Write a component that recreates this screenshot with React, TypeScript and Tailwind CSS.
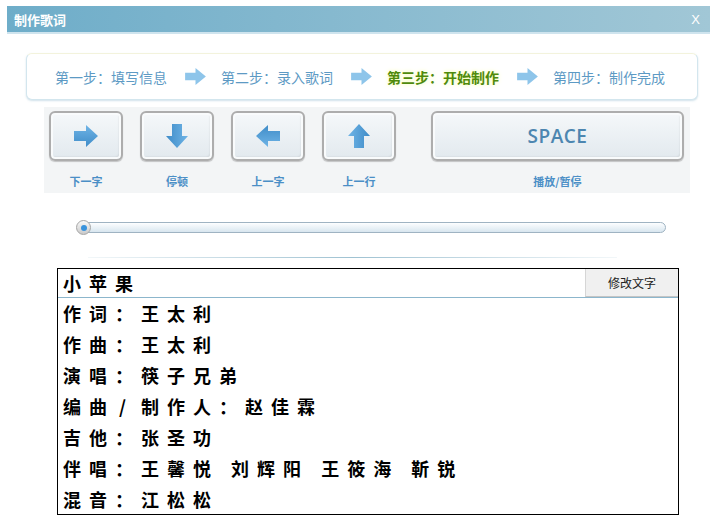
import React from 'react';

const cjk = { fontFamily: '"Noto Sans CJK SC", "Noto Sans", sans-serif' };

function Arrow({ dir, className }: { dir: 'right' | 'down' | 'left' | 'up'; className?: string }) {
  const rot = { right: 0, down: 90, left: 180, up: 270 }[dir];
  return (
    <svg viewBox="0 0 24 24" className={className}>
      <defs>
        <linearGradient id={`g-${dir}`} x1="0" y1="0" x2="0" y2="1">
          <stop offset="0" stopColor="#6fb4e6" />
          <stop offset="1" stopColor="#3f8cc8" />
        </linearGradient>
      </defs>
      <g transform={`rotate(${rot} 12 12)`}>
        <polygon points="0,7 12,7 12,1 24,12 12,23 12,17 0,17" fill={`url(#g-${dir})`} />
      </g>
    </svg>
  );
}

function StepArrow() {
  return (
    <svg viewBox="0 0 22 18" className="w-[21px] h-[17px] shrink-0">
      <polygon points="0,5 11,5 11,0 22,9 11,18 11,13 0,13" fill="#8ec5ea" />
    </svg>
  );
}

const keyCls =
  'rounded-[6px] border-2 border-[#adadad] bg-gradient-to-b from-[#f5f8fa] to-[#e2e9ee] shadow-[inset_0_0_0_2px_#f9fbfc,inset_-2px_-2px_2px_rgba(0,0,0,0.12),0_1px_1px_rgba(0,0,0,0.2)] flex items-center justify-center';

export default function App() {
  const steps = ['第一步：填写信息', '第二步：录入歌词', '第三步：开始制作', '第四步：制作完成'];
  const keys: { dir: 'right' | 'down' | 'left' | 'up'; label: string }[] = [
    { dir: 'right', label: '下一字' },
    { dir: 'down', label: '停顿' },
    { dir: 'left', label: '上一字' },
    { dir: 'up', label: '上一行' },
  ];
  const lines = [
    '作词：王太利',
    '作曲：王太利',
    '演唱：筷子兄弟',
    '编曲/制作人：赵佳霖',
    '吉他：张圣功',
    '伴唱：王馨悦 刘辉阳 王筱海 靳锐',
    '混音：江松松',
  ];

  return (
    <div className="w-[719px] h-[517px] bg-white overflow-hidden" style={cjk}>
      {/* title bar */}
      <div className="ml-[7px] mt-[6px] w-[703px] h-[26px] flex items-center justify-between pl-[7px] pr-[10px] bg-gradient-to-r from-[#6eadc9] to-[#a1c7d6]">
        <span className="text-white text-[13px] font-bold leading-none">制作歌词</span>
        <span className="text-white text-[13px] leading-none" style={{ fontFamily: '"Liberation Sans", sans-serif' }}>
          X
        </span>
      </div>
      <div className="ml-[7px] w-[703px] h-[2px] bg-[#cfe4ee]" />

      {/* steps */}
      <div className="mt-[19px] ml-[26px] w-[672px] h-[47px] rounded-[6px] border border-[#d3e6ee] border-t-[#f3f3dc] bg-white shadow-[0_1px_2px_rgba(120,170,195,0.35)] flex items-center pl-[28px] gap-[15px]">
        {steps.map((s, i) => (
          <React.Fragment key={s}>
            {i > 0 && <StepArrow />}
            <span
              className={`text-[14px] leading-none w-[115px] whitespace-nowrap ${
                i === 2 ? 'text-[#4f8a0c] font-semibold [text-shadow:0_0_4px_#f4ffa0]' : 'text-[#5d9ac4]'
              }`}
            >
              {s}
            </span>
          </React.Fragment>
        ))}
      </div>

      {/* key panel */}
      <div className="mt-[7px] ml-[44px] w-[646px] h-[86px] bg-[#f3f5f6] pt-[4px] pl-[5px]">
        <div className="flex">
          {keys.map((k) => (
            <div key={k.label} className="w-[74px] mr-[17px] flex flex-col items-center">
              <div className={`w-[74px] h-[50px] ${keyCls}`}>
                <Arrow dir={k.dir} className="w-[24px] h-[24px]" />
              </div>
              <span className="mt-[13px] text-[11px] font-bold text-[#4b8fc6] leading-[14px]">{k.label}</span>
            </div>
          ))}
          <div className="ml-[18px] w-[253px] flex flex-col items-center">
            <div className={`w-[253px] h-[50px] ${keyCls}`}>
              <span
                className="text-[19px] font-semibold text-[#4d86b0] tracking-[0.5px]"
                style={{ fontFamily: '"Open Sans", sans-serif' }}
              >
                SPACE
              </span>
            </div>
            <span className="mt-[13px] text-[11px] font-bold text-[#4b8fc6] leading-[14px]">播放/暂停</span>
          </div>
        </div>
      </div>

      {/* slider */}
      <div className="relative mt-[29px] ml-[77px] w-[589px] h-[11px] rounded-full border border-[#9fb3c2] bg-gradient-to-b from-[#fdfeff] to-[#d8e6ef]">
        <div className="absolute left-[-2px] top-[-3px] w-[15px] h-[15px] rounded-full border border-[#a5a5a5] bg-gradient-to-b from-[#fafafa] to-[#c9c9c9] flex items-center justify-center">
          <div className="w-[6px] h-[6px] rounded-full bg-[#3a93dc]" />
        </div>
      </div>

      {/* divider */}
      <div className="mt-[24px] ml-[88px] w-[529px] h-[1px] bg-gradient-to-r from-[#f2f7f9] via-[#9fc2d2] to-[#f2f7f9]" />

      {/* lyrics */}
      <div className="mt-[10px] ml-[57px] w-[622px] h-[247px] border border-black bg-white">
        <div className="h-[29px] flex items-stretch justify-between border-b border-[#8cb6cc]">
          <span className="pl-[5px] text-[18px] font-bold tracking-[8px] leading-[28px] text-black">小苹果</span>
          <div className="w-[93px] bg-[#f0f0f0] border-l border-[#d6d6d6] border-b border-b-[#c4c4c4] flex items-center justify-center text-[12px] text-[#222]">
            修改文字
          </div>
        </div>
        <div className="pl-[5px]">
          {lines.map((l) => (
            <div key={l} className="h-[31px] leading-[31px] text-[18px] font-bold tracking-[8px] text-black whitespace-pre">
              {l.split('/').map((part, i) => (
                <React.Fragment key={i}>
                  {i > 0 && <span className="inline-block w-[26px] pl-[4px] tracking-normal">/</span>}
                  {part}
                </React.Fragment>
              ))}
            </div>
          ))}
        </div>
      </div>
    </div>
  );
}
